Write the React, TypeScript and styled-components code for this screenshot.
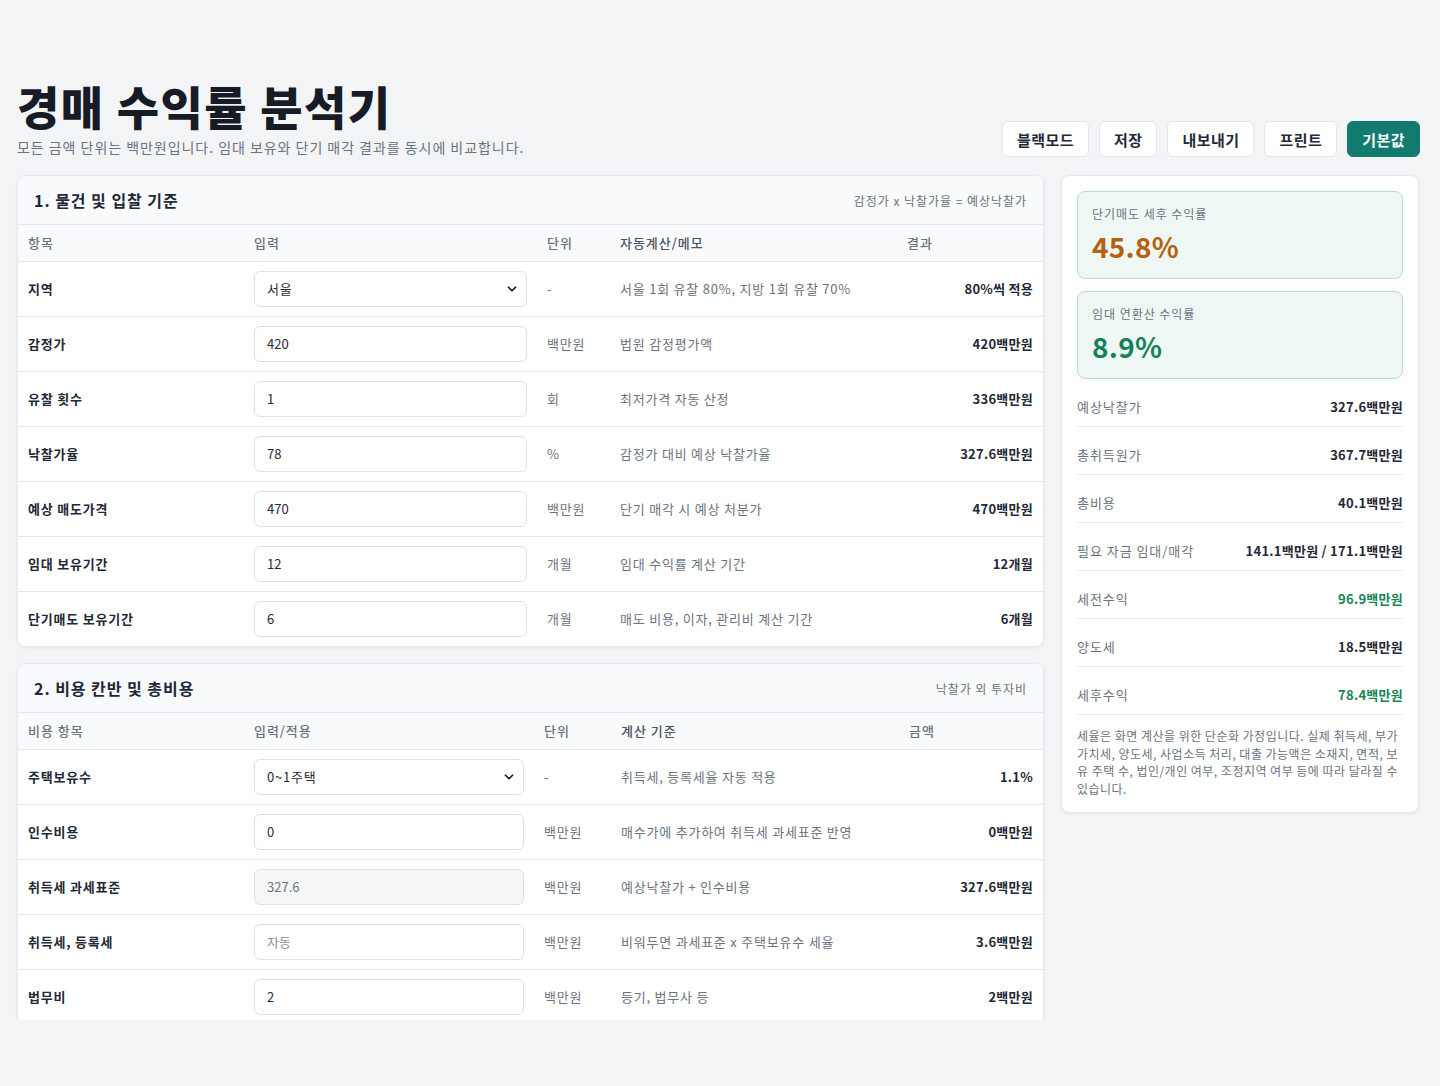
import styled, { createGlobalStyle } from 'styled-components';
import { ChevronDown } from 'lucide-react';

const GlobalStyle = createGlobalStyle`
  html, body {
    margin: 0;
    padding: 0;
    background: #f3f4f6;
  }
  body {
    font-family: 'Noto Sans CJK KR', 'Noto Sans', sans-serif;
    color: #111827;
    letter-spacing: 0.06em;
  }
  * { box-sizing: border-box; }
`;

const Page = styled.div`
  height: 1020px;
  overflow: hidden;
  padding: 81px 20px 0 17px;
`;

const Header = styled.header`
  display: flex;
  justify-content: space-between;
  align-items: flex-end;
  margin-bottom: 18px;
`;

const Title = styled.h1`
  margin: 0 0 8px;
  font-size: 46px;
  line-height: 48px;
  font-weight: 900;
  letter-spacing: 1.5px;
  color: #161b26;
`;

const Subtitle = styled.p`
  margin: 0;
  font-size: 14px;
  line-height: 20px;
  color: #6b7280;
`;

const Actions = styled.div`
  display: flex;
  gap: 10px;
`;

const Button = styled.button<{ $primary?: boolean }>`
  height: 36px;
  padding: 0 14px;
  border-radius: 6px;
  font-family: inherit;
  font-size: 15px;
  font-weight: 700;
  letter-spacing: 0.03em;
  border: 1px solid ${p => (p.$primary ? '#137a70' : '#e3e6ea')};
  background: ${p => (p.$primary ? '#137a70' : '#ffffff')};
  color: ${p => (p.$primary ? '#ffffff' : '#1f2937')};
`;

const Layout = styled.div`
  display: grid;
  grid-template-columns: minmax(0, 1fr) 358px;
  gap: 17px;
  align-items: start;
  margin-right: 1px;
`;

const Column = styled.div`
  display: flex;
  flex-direction: column;
  gap: 16px;
`;

const Card = styled.section`
  background: #ffffff;
  border: 1px solid #e6e8ec;
  border-radius: 8px;
  box-shadow: 0 1px 3px rgba(15, 23, 42, 0.06);
  overflow: hidden;
`;

const CardHead = styled.div`
  display: flex;
  justify-content: space-between;
  align-items: center;
  height: 49px;
  padding: 0 16px;
  background: #f9fafb;
  border-bottom: 1px solid #e5e7eb;
`;

const CardTitle = styled.h2`
  margin: 0;
  font-size: 16px;
  font-weight: 700;
  color: #1f2937;
`;

const CardNote = styled.span`
  font-size: 12px;
  color: #6b7280;
`;

const Table = styled.table`
  width: 100%;
  border-collapse: collapse;
  table-layout: fixed;
`;

const Th = styled.th<{ $strong?: boolean }>`
  height: 36px;
  padding: 0 10px;
  text-align: left;
  font-size: 13px;
  font-weight: 500;
  color: ${p => (p.$strong ? '#4b5563' : '#6b7280')};
  background: #f9fafb;
  border-bottom: 1px solid #e5e7eb;
`;

const Tr = styled.tr`
  & + & td { border-top: 1px solid #e5e7eb; }
`;

const Td = styled.td<{ $kind?: 'label' | 'muted' | 'result' }>`
  height: 55px;
  padding: 0 10px;
  font-size: 13px;
  font-weight: ${p => (p.$kind === 'label' || p.$kind === 'result' ? 700 : 400)};
  color: ${p => (p.$kind === 'muted' ? '#6b7280' : '#1f2937')};
  text-align: ${p => (p.$kind === 'result' ? 'right' : 'left')};
  letter-spacing: ${p => (p.$kind === 'result' ? '0.02em' : '0.06em')};
  white-space: nowrap;
`;

const Field = styled.input`
  width: 100%;
  height: 36px;
  padding: 0 12px;
  border: 1px solid #dde1e6;
  border-radius: 6px;
  font-family: inherit;
  font-size: 13px;
  color: #1f2937;
  background: #ffffff;
  &:disabled {
    background: #f4f6f8;
    color: #6b7280;
  }
  &::placeholder { color: #8b9099; }
`;

const SelectWrap = styled.div`
  position: relative;
  svg {
    position: absolute;
    right: 8px;
    top: 11px;
    pointer-events: none;
    color: #111827;
  }
`;

const Select = styled.select`
  appearance: none;
  width: 100%;
  height: 36px;
  padding: 0 12px;
  border: 1px solid #dde1e6;
  border-radius: 6px;
  font-family: inherit;
  font-size: 13px;
  letter-spacing: 0.06em;
  color: #1f2937;
  background: #ffffff;
`;

const Side = styled(Card)`
  padding: 15px;
`;

const Metrics = styled.div`
  display: flex;
  flex-direction: column;
  gap: 12px;
`;

const Metric = styled.div`
  height: 88px;
  padding: 14px 14px;
  border: 1px solid #b8dcd3;
  border-radius: 8px;
  background: #eff7f5;
`;

const MetricLabel = styled.div`
  font-size: 12px;
  line-height: 16px;
  color: #6b7280;
`;

const MetricValue = styled.div<{ $tone: 'orange' | 'green' }>`
  margin-top: 6px;
  font-size: 28px;
  line-height: 36px;
  font-weight: 700;
  letter-spacing: 0.01em;
  color: ${p => (p.$tone === 'orange' ? '#b4620f' : '#16825a')};
`;

const Stat = styled.div`
  display: flex;
  justify-content: space-between;
  align-items: center;
  padding: 18px 0 9px;
  line-height: 20px;
  border-bottom: 1px solid #e5e7eb;
  font-size: 13px;
`;

const StatLabel = styled.span`
  color: #6b7280;
`;

const StatValue = styled.span<{ $green?: boolean }>`
  font-weight: 700;
  letter-spacing: 0.02em;
  color: ${p => (p.$green ? '#178558' : '#1f2937')};
`;

const Disclaimer = styled.p`
  margin: 12px 0 0;
  font-size: 12px;
  line-height: 17.5px;
  letter-spacing: 0.04em;
  color: #6b7280;
`;

type Row = {
  label: string;
  value?: string;
  select?: string;
  disabled?: boolean;
  placeholder?: string;
  unit: string;
  memo: string;
  result: string;
};

const basisRows: Row[] = [
  { label: '지역', select: '서울', unit: '-', memo: '서울 1회 유찰 80%, 지방 1회 유찰 70%', result: '80%씩 적용' },
  { label: '감정가', value: '420', unit: '백만원', memo: '법원 감정평가액', result: '420백만원' },
  { label: '유찰 횟수', value: '1', unit: '회', memo: '최저가격 자동 산정', result: '336백만원' },
  { label: '낙찰가율', value: '78', unit: '%', memo: '감정가 대비 예상 낙찰가율', result: '327.6백만원' },
  { label: '예상 매도가격', value: '470', unit: '백만원', memo: '단기 매각 시 예상 처분가', result: '470백만원' },
  { label: '임대 보유기간', value: '12', unit: '개월', memo: '임대 수익률 계산 기간', result: '12개월' },
  { label: '단기매도 보유기간', value: '6', unit: '개월', memo: '매도 비용, 이자, 관리비 계산 기간', result: '6개월' },
];

const costRows: Row[] = [
  { label: '주택보유수', select: '0~1주택', unit: '-', memo: '취득세, 등록세율 자동 적용', result: '1.1%' },
  { label: '인수비용', value: '0', unit: '백만원', memo: '매수가에 추가하여 취득세 과세표준 반영', result: '0백만원' },
  { label: '취득세 과세표준', value: '327.6', disabled: true, unit: '백만원', memo: '예상낙찰가 + 인수비용', result: '327.6백만원' },
  { label: '취득세, 등록세', placeholder: '자동', unit: '백만원', memo: '비워두면 과세표준 x 주택보유수 세율', result: '3.6백만원' },
  { label: '법무비', value: '2', unit: '백만원', memo: '등기, 법무사 등', result: '2백만원' },
];

const stats = [
  { label: '예상낙찰가', value: '327.6백만원' },
  { label: '총취득원가', value: '367.7백만원' },
  { label: '총비용', value: '40.1백만원' },
  { label: '필요 자금 임대/매각', value: '141.1백만원 / 171.1백만원' },
  { label: '세전수익', value: '96.9백만원', green: true },
  { label: '양도세', value: '18.5백만원' },
  { label: '세후수익', value: '78.4백만원', green: true },
];

function InputCell({ row }: { row: Row }) {
  if (row.select) {
    return (
      <SelectWrap>
        <Select defaultValue={row.select}>
          <option>{row.select}</option>
        </Select>
        <ChevronDown size={14} strokeWidth={3} />
      </SelectWrap>
    );
  }
  return (
    <Field
      defaultValue={row.value}
      placeholder={row.placeholder}
      disabled={row.disabled}
    />
  );
}

function InputTable({ heads, widths, rows }: { heads: string[]; widths: number[]; rows: Row[] }) {
  return (
    <Table>
      <colgroup>
        {widths.map((w, i) => (
          <col key={i} style={{ width: w }} />
        ))}
      </colgroup>
      <thead>
        <tr>
          {heads.map((h, i) => (
            <Th key={h} $strong={i === 3}>{h}</Th>
          ))}
        </tr>
      </thead>
      <tbody>
        {rows.map(row => (
          <Tr key={row.label}>
            <Td $kind="label">{row.label}</Td>
            <Td><InputCell row={row} /></Td>
            <Td $kind="muted">{row.unit}</Td>
            <Td $kind="muted">{row.memo}</Td>
            <Td $kind="result">{row.result}</Td>
          </Tr>
        ))}
      </tbody>
    </Table>
  );
}

export default function App() {
  return (
    <>
      <GlobalStyle />
      <Page>
        <Header>
          <div>
            <Title>경매 수익률 분석기</Title>
            <Subtitle>모든 금액 단위는 백만원입니다. 임대 보유와 단기 매각 결과를 동시에 비교합니다.</Subtitle>
          </div>
          <Actions>
            <Button>블랙모드</Button>
            <Button>저장</Button>
            <Button>내보내기</Button>
            <Button>프린트</Button>
            <Button $primary>기본값</Button>
          </Actions>
        </Header>

        <Layout>
          <Column>
            <Card>
              <CardHead>
                <CardTitle>1. 물건 및 입찰 기준</CardTitle>
                <CardNote>감정가 x 낙찰가율 = 예상낙찰가</CardNote>
              </CardHead>
              <InputTable
                heads={['항목', '입력', '단위', '자동계산/메모', '결과']}
                widths={[226, 293, 73, 287, 146]}
                rows={basisRows}
              />
            </Card>

            <Card>
              <CardHead>
                <CardTitle>2. 비용 칸반 및 총비용</CardTitle>
                <CardNote>낙찰가 외 투자비</CardNote>
              </CardHead>
              <InputTable
                heads={['비용 항목', '입력/적용', '단위', '계산 기준', '금액']}
                widths={[226, 290, 77, 288, 144]}
                rows={costRows}
              />
            </Card>
          </Column>

          <Side>
            <Metrics>
              <Metric>
                <MetricLabel>단기매도 세후 수익률</MetricLabel>
                <MetricValue $tone="orange">45.8%</MetricValue>
              </Metric>
              <Metric>
                <MetricLabel>임대 연환산 수익률</MetricLabel>
                <MetricValue $tone="green">8.9%</MetricValue>
              </Metric>
            </Metrics>
            {stats.map(s => (
              <Stat key={s.label}>
                <StatLabel>{s.label}</StatLabel>
                <StatValue $green={s.green}>{s.value}</StatValue>
              </Stat>
            ))}
            <Disclaimer>
              세율은 화면 계산을 위한 단순화 가정입니다. 실제 취득세, 부가가치세, 양도세, 사업소득 처리, 대출 가능액은 소재지, 면적, 보유 주택 수, 법인/개인 여부, 조정지역 여부 등에 따라 달라질 수 있습니다.
            </Disclaimer>
          </Side>
        </Layout>
      </Page>
    </>
  );
}
